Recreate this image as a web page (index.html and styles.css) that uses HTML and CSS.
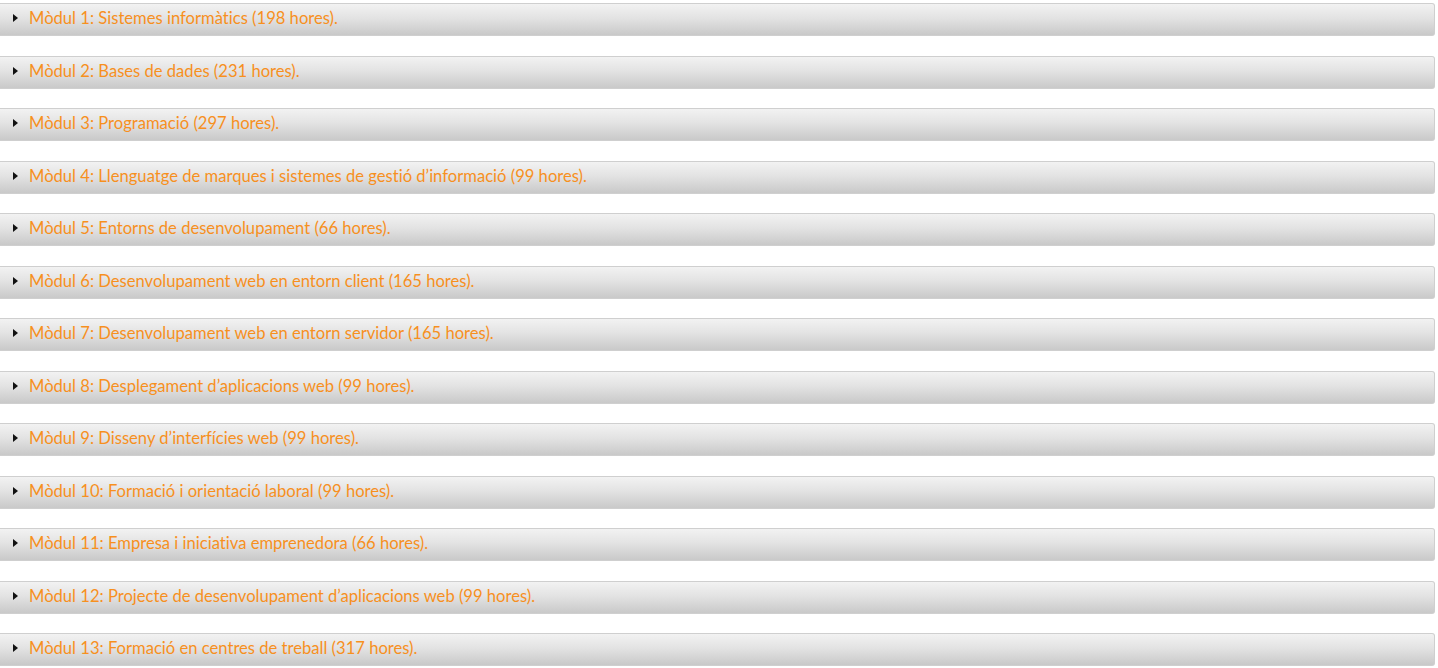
FILE: index.html
```html
<!DOCTYPE html>
<html lang="ca">
<head>
<meta charset="utf-8">
<title>Mòduls</title>
<link rel="stylesheet" href="styles.css">
</head>
<body>
<ul class="modules">
  <li class="module"><span class="arrow"></span><span class="title">Mòdul 1: Sistemes informàtics (198 hores).</span></li>
  <li class="module"><span class="arrow"></span><span class="title">Mòdul 2: Bases de dades (231 hores).</span></li>
  <li class="module"><span class="arrow"></span><span class="title">Mòdul 3: Programació (297 hores).</span></li>
  <li class="module"><span class="arrow"></span><span class="title">Mòdul 4: Llenguatge de marques i sistemes de gestió d’informació (99 hores).</span></li>
  <li class="module"><span class="arrow"></span><span class="title">Mòdul 5: Entorns de desenvolupament (66 hores).</span></li>
  <li class="module"><span class="arrow"></span><span class="title">Mòdul 6: Desenvolupament web en entorn client (165 hores).</span></li>
  <li class="module"><span class="arrow"></span><span class="title">Mòdul 7: Desenvolupament web en entorn servidor (165 hores).</span></li>
  <li class="module"><span class="arrow"></span><span class="title">Mòdul 8: Desplegament d’aplicacions web (99 hores).</span></li>
  <li class="module"><span class="arrow"></span><span class="title">Mòdul 9: Disseny d’interfícies web (99 hores).</span></li>
  <li class="module"><span class="arrow"></span><span class="title">Mòdul 10: Formació i orientació laboral (99 hores).</span></li>
  <li class="module"><span class="arrow"></span><span class="title">Mòdul 11: Empresa i iniciativa emprenedora (66 hores).</span></li>
  <li class="module"><span class="arrow"></span><span class="title">Mòdul 12: Projecte de desenvolupament d’aplicacions web (99 hores).</span></li>
  <li class="module"><span class="arrow"></span><span class="title">Mòdul 13: Formació en centres de treball (317 hores).</span></li>
</ul>
</body>
</html>
```
FILE: styles.css
```css
html, body {
  margin: 0;
  padding: 0;
  background: #ffffff;
}
body {
  font-family: Lato, "Liberation Sans", sans-serif;
}
.modules {
  list-style: none;
  margin: 0;
  padding: 3px 3px 0 0;
  display: flex;
  flex-direction: column;
  gap: 19.5px;
}
.module {
  height: 33px;
  box-sizing: border-box;
  display: flex;
  align-items: center;
  border: 1px solid #cfcfcf;
  border-left: none;
  border-radius: 0 3px 3px 0;
  background: linear-gradient(to bottom, #f2f2f2 0%, #e3e3e3 45%, #c9c9c9 100%);
  padding-left: 13px;
}
.arrow {
  width: 0;
  height: 0;
  border-top: 4.5px solid transparent;
  border-bottom: 4.5px solid transparent;
  border-left: 5px solid #111;
  margin-right: 11px;
  margin-top: -3px;
}
.title {
  color: #f7901e;
  font-size: 16.6px;
  line-height: 20px;
  margin-top: -3px;
  font-variant-ligatures: none;
}
```
